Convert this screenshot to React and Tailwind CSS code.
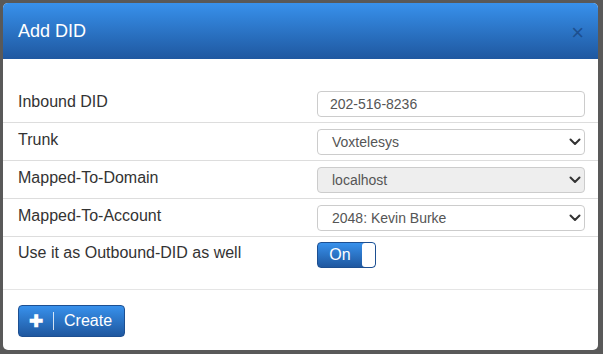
import React from "react";

const Chevron = () => (
  <svg width="12" height="8" viewBox="0 0 12 8" className="absolute right-[3px] top-1/2 -translate-y-1/2">
    <path d="M1.5 1.5 L6 6 L10.5 1.5" fill="none" stroke="#333" strokeWidth="2" strokeLinecap="round" strokeLinejoin="round" />
  </svg>
);

function Select({ value, disabled }) {
  return (
    <div className={`relative h-[26px] w-full rounded-[4px] border border-[#ccc] ${disabled ? "bg-[#eeeeee]" : "bg-white"} pl-[14px] text-[14px] leading-[24px] text-[#555]`}>
      {value}
      <Chevron />
    </div>
  );
}

function Row({ label, children }) {
  return (
    <div className="flex h-[38px] items-center border-b border-[#ddd]">
      <div className="w-[299px] pb-[4px] pl-[15px] text-[16px] text-[#333]">{label}</div>
      <div className="flex-1 pl-[15px] pr-[13px]">{children}</div>
    </div>
  );
}

export default function App() {
  return (
    <div className="h-[354px] w-[603px] bg-[#595959] pt-[3px] pl-[3px]" style={{ fontFamily: '"Liberation Sans", Arial, sans-serif' }}>
      <div className="flex h-[347px] w-[595px] flex-col overflow-hidden rounded-[5px] bg-white">
        <div className="flex h-[56px] shrink-0 items-center justify-between bg-gradient-to-b from-[#3891ec] to-[#1f58a0] pl-[15px] pr-[14px]">
          <span className="text-[18px] text-white">Add DID</span>
          <span className="pt-[3px] text-[22px] leading-none text-[#1d4f8f]">×</span>
        </div>
        <div className="pt-[26px]">
          <Row label="Inbound DID">
            <div className="h-[26px] w-full rounded-[4px] border border-[#ccc] bg-white pl-[12px] text-[14px] leading-[24px] text-[#555]">202-516-8236</div>
          </Row>
          <Row label="Trunk"><Select value="Voxtelesys" /></Row>
          <Row label="Mapped-To-Domain"><Select value="localhost" disabled /></Row>
          <Row label="Mapped-To-Account"><Select value="2048: Kevin Burke" /></Row>
          <div className="flex h-[52px] items-start pt-[1px]">
            <div className="w-[299px] pl-[15px] pt-[3px] text-[16px] text-[#333]">Use it as Outbound-DID as well</div>
            <div className="pl-[15px] pt-[4px]">
              <div className="flex h-[26px] w-[59px] overflow-hidden rounded-[4px] border border-[#1d4f91] bg-gradient-to-b from-[#3891ec] to-[#1f58a0]">
                <div className="flex-1 text-center text-[16px] leading-[24px] text-white">On</div>
                <div className="w-[13px] rounded-[3px] bg-white"></div>
              </div>
            </div>
          </div>
        </div>
        <div className="border-t border-[#e5e5e5] pt-[15px] pl-[15px]">
          <div className="flex h-[32px] w-[107px] items-center rounded-[4px] border border-[#1d4f91] bg-gradient-to-b from-[#3891ec] to-[#1f58a0] text-white">
            <span className="w-[34px] text-center text-[17px] font-bold leading-none">✚</span>
            <span className="h-[18px] border-l border-white/80"></span>
            <span className="pl-[10px] text-[16px]">Create</span>
          </div>
        </div>
      </div>
    </div>
  );
}
